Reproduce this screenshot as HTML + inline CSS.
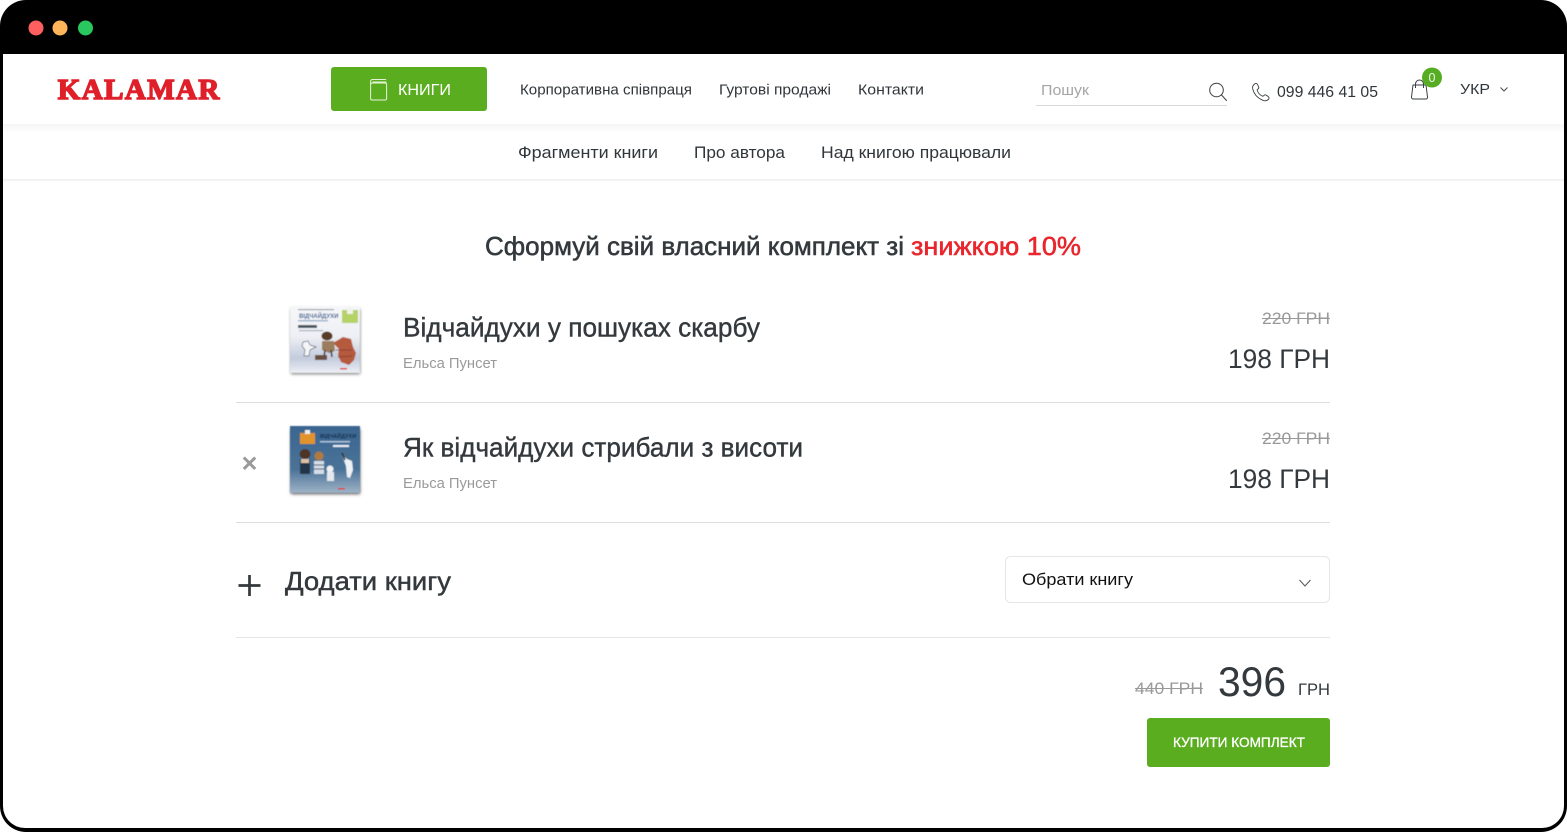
<!DOCTYPE html>
<html lang="uk">
<head>
<meta charset="utf-8">
<title>Kalamar</title>
<style>
html,body{margin:0;padding:0;background:#fff;width:1567px;height:832px;overflow:hidden}
svg{display:block;font-family:"Liberation Sans","DejaVu Sans",sans-serif}
</style>
</head>
<body>
<svg xmlns="http://www.w3.org/2000/svg" width="1567" height="832" viewBox="0 0 1567 832">
<defs>
<filter id="b" x="-10%" y="-10%" width="120%" height="120%"><feGaussianBlur stdDeviation="0.6"/></filter>
<filter id="s" x="-20%" y="-20%" width="140%" height="140%"><feGaussianBlur stdDeviation="1.6"/></filter>
<linearGradient id="g1" x1="0" y1="0" x2="0" y2="1"><stop offset="0" stop-color="#f5f5f5"/><stop offset="1" stop-color="#fdfdfd"/></linearGradient>
<linearGradient id="g2" x1="0" y1="0" x2="0" y2="1"><stop offset="0" stop-color="#ececec"/><stop offset="1" stop-color="#ffffff"/></linearGradient>
<linearGradient id="c1" x1="0" y1="0" x2="0" y2="1"><stop offset="0" stop-color="#f6f7f9"/><stop offset=".45" stop-color="#eef0f5"/><stop offset=".78" stop-color="#c3cbdd"/><stop offset="1" stop-color="#edeff4"/></linearGradient>
<linearGradient id="c2" x1="0" y1="0" x2="0" y2="1"><stop offset="0" stop-color="#3a6590"/><stop offset=".65" stop-color="#4b7398"/><stop offset="1" stop-color="#9fb3c6"/></linearGradient>
</defs>

<!-- window frame -->
<rect x="0" y="0" width="1567" height="832" rx="26" fill="#000"/>
<path d="M3 54H1564V806a22 22 0 0 1-22 22H25a22 22 0 0 1-22-22Z" fill="#fff"/>
<circle cx="36" cy="28" r="7.5" fill="#ff5f5f"/>
<circle cx="60" cy="28" r="7.5" fill="#ffb65a"/>
<circle cx="85.5" cy="28" r="7.5" fill="#2ac75e"/>

<!-- header -->
<rect x="3" y="124" width="1561" height="8" fill="url(#g1)"/>
<rect x="3" y="179" width="1561" height="3" fill="url(#g2)"/>

<text x="57.800" y="99.200" font-family="'Liberation Serif',serif" font-weight="700" font-size="29" fill="#df1f29" stroke="#df1f29" stroke-width="1.500" stroke-linejoin="miter" textLength="161.500" lengthAdjust="spacing">KALAMAR</text>

<rect x="331" y="67" width="156" height="44" rx="3" fill="#5bad20"/>
<g fill="none" stroke="#e6f3dc" stroke-width="1">
<rect x="370.600" y="83" width="16" height="17" rx="1.500"/>
<path d="M370.600 84v-2.500a2 2 0 0 1 2-2h13.500M372.500 82h14"/>
</g>
<text x="398" y="95" font-size="15.500" fill="#fff" textLength="53" lengthAdjust="spacingAndGlyphs">КНИГИ</text>

<g font-size="14.500" fill="#30363a">
<text x="520" y="94.500" textLength="172" lengthAdjust="spacingAndGlyphs">Корпоративна співпраця</text>
<text x="719" y="94.500" textLength="112" lengthAdjust="spacingAndGlyphs">Гуртові продажі</text>
<text x="858" y="94.500" textLength="66" lengthAdjust="spacingAndGlyphs">Контакти</text>
</g>

<text x="1041" y="95" font-size="15" fill="#a5a5a5" textLength="48" lengthAdjust="spacingAndGlyphs">Пошук</text>
<rect x="1036" y="105" width="191" height="1" fill="#d8d8d8"/>
<g fill="none" stroke="#3a3f42" stroke-width="1" stroke-linecap="round">
<circle cx="1216.500" cy="90" r="6.800"/>
<path d="M1221.500 95l5 5.500"/>
</g>
<path d="M1254 84.500c1.500-1.500 2.800-1.300 3.600.2l1 2c.4.900.2 1.600-.5 2.200l-1 .9c.7 2.800 3 5.400 5.800 6.500l1.200-1c.7-.6 1.400-.6 2.200-.1l1.700 1.200c1.300 1 1.400 2 .3 3.100-1.500 1.500-3.600 1.700-5.800.7-4.900-2.200-8.500-6.300-9.700-11-.5-2-.2-3.500 1.200-4.700Z" fill="none" stroke="#3a3f42" stroke-width=".9" stroke-linejoin="round"/>
<text x="1277" y="97" font-size="15.500" fill="#30363a" textLength="101" lengthAdjust="spacingAndGlyphs">099 446 41 05</text>

<g fill="none" stroke="#3a3f42" stroke-width="1" stroke-linejoin="round">
<path d="M1413 85h13l1.500 12a1.700 1.700 0 0 1-1.700 2h-12.600a1.700 1.700 0 0 1-1.700-2Z"/>
<path d="M1415.500 88v-4a4 4 0 0 1 8 0v4"/>
</g>
<circle cx="1432" cy="77.500" r="10" fill="#56ad24"/>
<text x="1432" y="82" font-size="12.500" fill="#eef7e6" text-anchor="middle">0</text>
<text x="1460" y="94" font-size="14.500" fill="#30363a" textLength="30" lengthAdjust="spacingAndGlyphs">УКР</text>
<path d="M1500.500 87.500l3.500 3.500 3.500-3.500" fill="none" stroke="#4a4f52" stroke-width="1.100"/>

<!-- subnav -->
<g font-size="16.500" fill="#30363a">
<text x="518" y="158" textLength="140" lengthAdjust="spacingAndGlyphs">Фрагменти книги</text>
<text x="694" y="158" textLength="91" lengthAdjust="spacingAndGlyphs">Про автора</text>
<text x="821" y="158" textLength="190" lengthAdjust="spacingAndGlyphs">Над книгою працювали</text>
</g>

<!-- heading -->
<text x="485" y="255" font-size="26" fill="#33393c" stroke="#33393c" stroke-width=".55" textLength="419" lengthAdjust="spacingAndGlyphs">Сформуй свій власний комплект зі</text>
<text x="911" y="255" font-size="26" fill="#e8262c" stroke="#e8262c" stroke-width=".55" textLength="170" lengthAdjust="spacingAndGlyphs">знижкою 10%</text>

<!-- item 1 -->
<rect x="291" y="309" width="69" height="65" fill="#777" filter="url(#s)"/>
<g filter="url(#b)">
<rect x="290" y="306" width="70" height="67" fill="url(#c1)"/>
<rect x="298" y="309" width="36" height="1.200" fill="#9aa3b0"/>
<text x="299" y="318" font-size="6" font-weight="700" fill="#2f5a8c">ВІДЧАЙДУХИ</text>
<rect x="298" y="320" width="30" height="1.500" fill="#9fb4cc"/>
<rect x="298" y="325" width="19" height="3" fill="#4c5460"/>
<rect x="299" y="330" width="24" height="1.200" fill="#a9b0bb"/>
<rect x="342" y="310" width="16" height="13" fill="#b5d266"/>
<rect x="347" y="308" width="6" height="6" fill="#f2f2ea"/>
<path d="M333 343l10-6 8 2 2 8 3 6-2 7-5 5-8-3-3-7 1-6Z" fill="#b55a3e"/>
<path d="M336 350l16 0M338 357l14-1" stroke="#8e4030" stroke-width="1"/>
<ellipse cx="327" cy="336" rx="5.500" ry="4.500" fill="#5a3a28"/>
<path d="M322 341l12 0 1 10-6 2-7-3Z" fill="#9b7c5d"/>
<path d="M325 350l-1 7M331 350l1 7" stroke="#3d3d46" stroke-width="1.600"/>
<path d="M303 342l5-1 2 4 6 2-6 3-1 6h-5l1-6-3-4Z" fill="#f4f5f7" stroke="#59616e" stroke-width=".7"/>
<rect x="315" y="355" width="12" height="5" fill="#6a5040"/>
<rect x="340" y="368" width="7" height="1.500" fill="#d33"/>
</g>
<text x="403" y="336.500" font-size="27" fill="#33393c" stroke="#33393c" stroke-width=".4" textLength="357" lengthAdjust="spacingAndGlyphs">Відчайдухи у пошуках скарбу</text>
<text x="403" y="368" font-size="15" fill="#999" textLength="94" lengthAdjust="spacingAndGlyphs">Ельса Пунсет</text>
<text x="1262" y="324" font-size="16.500" fill="#999" textLength="68" lengthAdjust="spacingAndGlyphs">220 ГРН</text>
<rect x="1262" y="318" width="68" height="1" fill="#999"/>
<text x="1228" y="368" font-size="27" fill="#33393c" textLength="102" lengthAdjust="spacingAndGlyphs">198 ГРН</text>
<rect x="236" y="402" width="1094" height="1" fill="#dddddd"/>

<!-- item 2 -->
<path d="M243.800 457.500l11.400 11.400M255.200 457.500l-11.400 11.400" stroke="#9a9a9a" stroke-width="3" fill="none"/>
<rect x="291" y="429" width="69" height="65" fill="#555" filter="url(#s)"/>
<g filter="url(#b)">
<rect x="290" y="426" width="70" height="67" fill="url(#c2)"/>
<rect x="300" y="433" width="15" height="11" fill="#e2942a"/>
<rect x="305" y="430" width="5" height="4" fill="#eee"/>
<text x="320" y="438" font-size="5.500" font-weight="700" fill="#13294a">ВІДЧАЙДУХИ</text>
<rect x="320" y="441" width="30" height="1.500" fill="#a9c0d8"/>
<rect x="333" y="445" width="16" height="2" fill="#e8eef5"/>
<ellipse cx="305" cy="454" rx="5.500" ry="5" fill="#4d3526"/>
<rect x="300" y="459" width="10" height="15" fill="#24364a"/>
<rect x="301" y="459" width="8" height="4" fill="#dcc3a8"/>
<circle cx="319" cy="456" r="4.500" fill="#b07a3e"/>
<rect x="314" y="461" width="10" height="13" fill="#d3dde8"/>
<path d="M314 465h10M314 469h10" stroke="#33485f" stroke-width="1"/>
<circle cx="330" cy="469" r="3.500" fill="#eef0f2"/>
<rect x="327" y="472" width="7" height="9" fill="#e5e8ec"/>
<path d="M342 455l5 4 5 2 1 9-3 8-3-1-1-11Z" fill="#eef2f5"/>
<path d="M342 453l3 7" stroke="#222" stroke-width="1.500"/>
<rect x="338" y="488" width="7" height="1.500" fill="#d33"/>
</g>
<text x="403" y="456.500" font-size="27" fill="#33393c" stroke="#33393c" stroke-width=".4" textLength="400" lengthAdjust="spacingAndGlyphs">Як відчайдухи стрибали з висоти</text>
<text x="403" y="488" font-size="15" fill="#999" textLength="94" lengthAdjust="spacingAndGlyphs">Ельса Пунсет</text>
<text x="1262" y="444" font-size="16.500" fill="#999" textLength="68" lengthAdjust="spacingAndGlyphs">220 ГРН</text>
<rect x="1262" y="438" width="68" height="1" fill="#999"/>
<text x="1228" y="488" font-size="27" fill="#33393c" textLength="102" lengthAdjust="spacingAndGlyphs">198 ГРН</text>
<rect x="236" y="522" width="1094" height="1" fill="#dddddd"/>

<!-- add book -->
<path d="M238.500 585.500h22M249.500 575v21" stroke="#33393c" stroke-width="2.700" fill="none"/>
<text x="285" y="590" font-size="26" fill="#33393c" stroke="#33393c" stroke-width=".45" textLength="166" lengthAdjust="spacingAndGlyphs">Додати книгу</text>
<rect x="1005.500" y="556.500" width="324" height="46" rx="5" fill="#fff" stroke="#e6e6e6"/>
<text x="1022" y="585" font-size="16.500" fill="#111" textLength="111" lengthAdjust="spacingAndGlyphs">Обрати книгу</text>
<path d="M1299.500 580l5.500 6 5.500-6" fill="none" stroke="#555" stroke-width="1"/>
<rect x="236" y="637" width="1094" height="1" fill="#e5e5e5"/>

<!-- total -->
<text x="1135" y="694" font-size="16.500" fill="#999" textLength="68" lengthAdjust="spacingAndGlyphs">440 ГРН</text>
<rect x="1135" y="688" width="68" height="1" fill="#999"/>
<text x="1218" y="696" font-size="42" fill="#33393c" textLength="68" lengthAdjust="spacingAndGlyphs">396</text>
<text x="1298" y="695" font-size="17" fill="#33393c" textLength="32" lengthAdjust="spacingAndGlyphs">ГРН</text>
<rect x="1147" y="718" width="183" height="49" rx="3" fill="#5bad20"/>
<text x="1173" y="747" font-size="13.500" fill="#fff" stroke="#fff" stroke-width=".3" textLength="132" lengthAdjust="spacingAndGlyphs">КУПИТИ КОМПЛЕКТ</text>
</svg>
</body>
</html>
